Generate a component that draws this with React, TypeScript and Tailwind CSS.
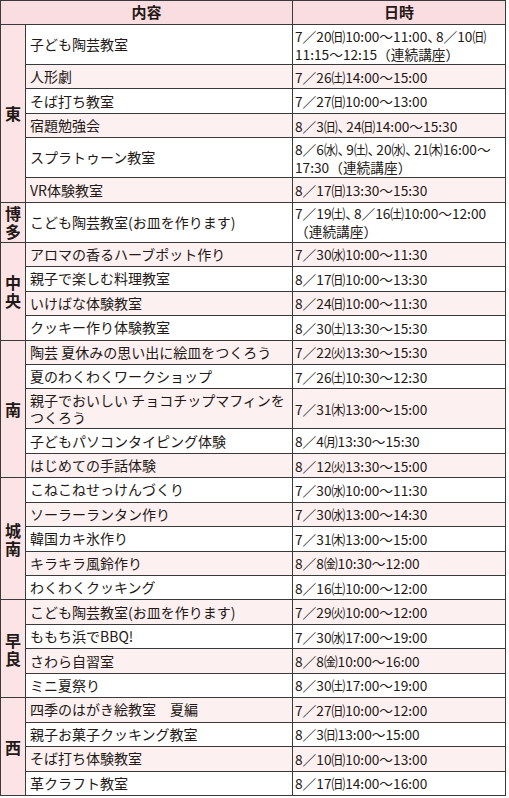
import React from "react";

type Row = { c: React.ReactNode; d: string[]; dbl?: boolean };
type Group = { label: string[]; span: string; rows: Row[] };

const groups: Group[] = [
  {
    label: ["東"],
    span: "row-span-6",
    rows: [
      {
        c: "子ども陶芸教室",
        d: ["7／20㈰10:00〜11:00、8／10㈰", "11:15〜12:15（連続講座）"],
        dbl: true,
      },
      { c: "人形劇", d: ["7／26㈯14:00〜15:00"] },
      { c: "そば打ち教室", d: ["7／27㈰10:00〜13:00"] },
      { c: "宿題勉強会", d: ["8／3㈰、24㈰14:00〜15:30"] },
      {
        c: "スプラトゥーン教室",
        d: ["8／6㈬、9㈯、20㈬、21㈭16:00〜", "17:30（連続講座）"],
        dbl: true,
      },
      { c: "VR体験教室", d: ["8／17㈰13:30〜15:30"] },
    ],
  },
  {
    label: ["博", "多"],
    span: "row-span-1",
    rows: [
      {
        c: "こども陶芸教室(お皿を作ります)",
        d: ["7／19㈯、8／16㈯10:00〜12:00", "（連続講座）"],
        dbl: true,
      },
    ],
  },
  {
    label: ["中", "央"],
    span: "row-span-4",
    rows: [
      { c: "アロマの香るハーブポット作り", d: ["7／30㈬10:00〜11:30"] },
      { c: "親子で楽しむ料理教室", d: ["8／17㈰10:00〜13:30"] },
      { c: "いけばな体験教室", d: ["8／24㈰10:00〜11:30"] },
      { c: "クッキー作り体験教室", d: ["8／30㈯13:30〜15:30"] },
    ],
  },
  {
    label: ["南"],
    span: "row-span-5",
    rows: [
      { c: "陶芸 夏休みの思い出に絵皿をつくろう", d: ["7／22㈫13:30〜15:30"] },
      { c: "夏のわくわくワークショップ", d: ["7／26㈯10:30〜12:30"] },
      {
        c: (
          <>
            親子でおいしい チョコチップマフィンを
            <br />
            つくろう
          </>
        ),
        d: ["7／31㈭13:00〜15:00"],
        dbl: true,
      },
      { c: "子どもパソコンタイピング体験", d: ["8／4㈪13:30〜15:30"] },
      { c: "はじめての手話体験", d: ["8／12㈫13:30〜15:00"] },
    ],
  },
  {
    label: ["城", "南"],
    span: "row-span-5",
    rows: [
      { c: "こねこねせっけんづくり", d: ["7／30㈬10:00〜11:30"] },
      { c: "ソーラーランタン作り", d: ["7／30㈬13:00〜14:30"] },
      { c: "韓国カキ氷作り", d: ["7／31㈭13:00〜15:00"] },
      { c: "キラキラ風鈴作り", d: ["8／8㈮10:30〜12:00"] },
      { c: "わくわくクッキング", d: ["8／16㈯10:00〜12:00"] },
    ],
  },
  {
    label: ["早", "良"],
    span: "row-span-4",
    rows: [
      { c: "こども陶芸教室(お皿を作ります)", d: ["7／29㈫10:00〜12:00"] },
      { c: "ももち浜でBBQ!", d: ["7／30㈬17:00〜19:00"] },
      { c: "さわら自習室", d: ["8／8㈮10:00〜16:00"] },
      { c: "ミニ夏祭り", d: ["8／30㈯17:00〜19:00"] },
    ],
  },
  {
    label: ["西"],
    span: "row-span-4",
    rows: [
      { c: "四季のはがき絵教室　夏編", d: ["7／27㈰10:00〜12:00"] },
      { c: "親子お菓子クッキング教室", d: ["8／3㈰13:00〜15:00"] },
      { c: "そば打ち体験教室", d: ["8／10㈰10:00〜13:00"] },
      { c: "革クラフト教室", d: ["8／17㈰14:00〜16:00"] },
    ],
  },
];

function DateLine({ text }: { text: string }) {
  const parts = text.split("、");
  return (
    <span className="block">
      {parts.map((p, i) => (
        <React.Fragment key={i}>
          {i > 0 && <span className="tracking-[-5px]">、</span>}
          {p}
        </React.Fragment>
      ))}
    </span>
  );
}

export default function App() {
  let idx = 0;
  const cells: React.ReactNode[] = [];
  groups.forEach((g, gi) => {
    cells.push(
      <div
        key={`g${gi}`}
        className={`${g.span} col-start-1 bg-[#fce4e6] flex flex-col items-center justify-center font-bold text-[16px] leading-[18px]`}
      >
        {g.label.map((l, i) => (
          <span key={i}>{l}</span>
        ))}
      </div>
    );
    g.rows.forEach((r, ri) => {
      const pink = idx % 2 === 1;
      const bg = pink ? "bg-[#fdf0f1]" : "bg-white";
      const h = r.dbl ? "h-[39px]" : "h-[23.44px]";
      cells.push(
        <div
          key={`c${gi}-${ri}`}
          className={`col-start-2 ${bg} ${h} flex items-center pl-[4px] text-[14px] leading-[17px]`}
        >
          <span>{r.c}</span>
        </div>
      );
      cells.push(
        <div
          key={`d${gi}-${ri}`}
          className={`col-start-3 ${bg} ${h} flex items-center pl-[2px] text-[13.7px] leading-[18px] whitespace-nowrap`}
        >
          <div>
            {r.d.map((t, i) => (
              <DateLine key={i} text={t} />
            ))}
          </div>
        </div>
      );
      idx++;
    });
  });

  return (
    <div className="bg-white w-[509px] h-[798px] font-['Noto_Sans_CJK_JP','Noto_Sans_CJK_SC',sans-serif] text-[#231815]">
      <div className="w-[506px] grid grid-cols-[24px_266px_212px] gap-px bg-[#3a3a3a] border border-[#3a3a3a]">
        <div className="col-span-2 h-[23px] bg-[#f9dde0] flex items-center justify-center font-bold text-[15px]">
          内容
        </div>
        <div className="h-[23px] bg-[#f9dde0] flex items-center justify-center font-bold text-[15px]">
          日時
        </div>
        {cells}
      </div>
    </div>
  );
}
